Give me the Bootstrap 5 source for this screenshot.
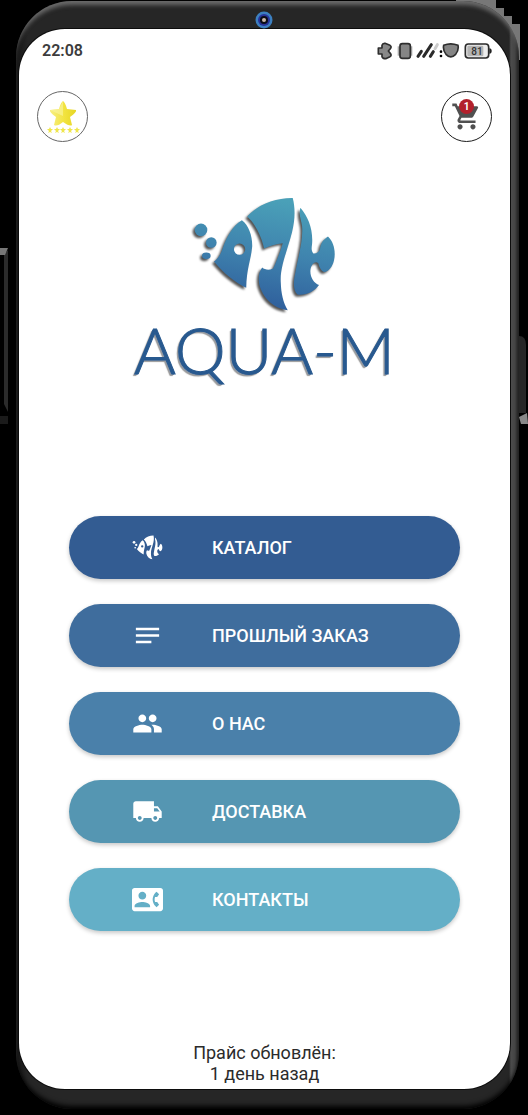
<!DOCTYPE html>
<html lang="ru">
<head>
<meta charset="utf-8">
<meta name="viewport" content="width=device-width, initial-scale=1">
<title>AQUA-M</title>
<link href="https://cdn.jsdelivr.net/npm/bootstrap@5.3.0/dist/css/bootstrap.min.css" rel="stylesheet">
<style>
  body { background: #000; font-family: Roboto, "Liberation Sans", sans-serif; color: #2b2b2b; }
  .device-wrap { min-height: 100vh; padding: 1px 9px 6px 16px; overflow: hidden; }
  .device {
    padding: 28px 9px 20px 3px;
    border-radius: 56px;
    background: linear-gradient(90deg, #161616 0, #262626 12px, #262626 calc(100% - 10px), #4c4c4c calc(100% - 8px), #444 calc(100% - 4px), #1c1c1c 100%);
    box-shadow: inset 0 6px 4px -2px #6a6a6a, inset 0 -5px 5px -2px #000;
  }
  .device-screen { background: #fff; border-radius: 46px; box-shadow: 0 0 0 1px #0c0c0c; }
  .camera { top: 10px; left: 50%; margin-left: -13px; }
  .corner-light { top: 0; right: 8px; }
  .side-key-left { top: 248px; left: 0; }
  .side-key-right { top: 333px; right: 0; }
  .status-row { padding: 12px 16px 0 23px; font-size: 16px; line-height: 20px; font-weight: 600; color: #3c3c3c; }
  .tool-row { padding: 30px 18px 0 18px; }
  .round-btn { width: 51px; height: 51px; padding: 0; border-radius: 50%; background: #fff; border: 1px solid #1c1c1c; }
  .round-btn.thin { border-color: #666; }
  .cart-count { top: 7px; left: 17px; width: 15px; height: 15px; font-size: 10px; line-height: 15px; background: #b3202c; color: #fff; font-weight: 700; border-radius: 50%; }
  .brand { padding-top: 54px; }
  .brand-fish { filter: drop-shadow(-2px 2px 1px #555); }
  .brand-name {
    font: 300 64px/70px Lato, "Open Sans", sans-serif; color: #28598f; -webkit-text-stroke: 1px #28598f;
    text-shadow: -1px 1px 0 #8d97a6, -2px 2px 1px #999; margin: 2px 0 0;
  }
  .menu { padding: 131px 50px 0; gap: 25px; }
  .menu-btn { height: 63px; border: 0; border-radius: 32px; padding: 0 0 0 63px; color: #fff; font-size: 18px; line-height: 24px; font-weight: 500; box-shadow: 0 2px 4px rgba(0,0,0,.22); }
  .menu-btn:hover { color: #fff; filter: brightness(1.08); }
  .menu-icon { width: 80px; }
  .tone-1 { background: #335c92; } .tone-2 { background: #3f6d9d; } .tone-3 { background: #4a80aa; }
  .tone-4 { background: #5596b2; } .tone-5 { background: #64afc7; }
  .price-note { font-size: 18px; line-height: 21px; padding: 40px 0 5px; margin: 0; }
</style>
</head>
<body>
<svg width="0" height="0" class="position-absolute" aria-hidden="true">
  <defs>
    <linearGradient id="sea" gradientUnits="userSpaceOnUse" x1="300" y1="50" x2="250" y2="370">
      <stop offset="0" stop-color="#4aa0b8"/><stop offset=".5" stop-color="#3f83ae"/><stop offset="1" stop-color="#2f5f9c"/>
    </linearGradient>
    <symbol id="fish" viewBox="30 36 440 352">
      <circle cx="59" cy="138" r="19"/><circle cx="90" cy="176" r="16"/><ellipse cx="75" cy="216" rx="13" ry="10"/>
      <path fill-rule="evenodd" d="M182 109C203 124 214 158 213 188C210 225 196 254 195 312C164 298 124 266 98 233C110 226 118 211 124 194C137 157 154 126 182 109ZM175 179A17 17 0 1 0 175 213A17 17 0 1 0 175 179Z"/>
      <path d="M198 98C231 60 286 41 335 42C343 73 342 108 333 144C318 203 296 250 299 296C300 330 306 355 320 380C275 374 243 340 234 301C231 281 233 264 243 251C251 258 264 260 276 254C287 231 297 204 305 178C284 179 265 187 249 194C239 151 220 118 198 98Z"/>
      <path d="M358 71C382 99 397 137 393 182C391 193 391 202 397 209C407 210 414 204 417 196C418 180 426 168 441 158C459 175 465 204 459 230C454 250 443 263 429 265C417 258 414 246 412 238C403 230 390 240 388 260C387 282 399 298 414 304C398 326 371 336 349 332C337 322 336 298 342 271C350 221 367 174 363 126C361 111 352 92 358 71Z"/>
    </symbol>
  </defs>
</svg>

<div class="device-wrap position-relative d-flex flex-column">
  <svg class="corner-light position-absolute" width="64" height="66" aria-hidden="true"><path d="M0 0H40V8H48V16H56V24H64V60H0Z" fill="#777"/></svg>
  <svg class="side-key-left position-absolute" width="9" height="176" aria-hidden="true"><path d="M4 6L8 2V164L4 156Z" fill="#2b2b2b"/><path d="M0 0H8L5 7H0Z" fill="#777"/><path d="M0 168H8V176H0Z" fill="#1b1b1b"/></svg>
  <svg class="side-key-right position-absolute" width="9" height="92" aria-hidden="true"><path d="M0 3Q7 3 7 12V80H0Z" fill="#262626"/><path d="M0 84L8 80L9 91H2Z" fill="#888"/></svg>

  <div class="device position-relative flex-grow-1 d-flex flex-column">
    <svg class="camera position-absolute" width="18" height="18" viewBox="0 0 18 18" aria-hidden="true"><circle cx="9" cy="9" r="8.500" fill="#3c7fc0"/><circle cx="9" cy="9" r="6" fill="#27339a"/><circle cx="9" cy="9" r="4" fill="#0c0c16"/><circle cx="9" cy="9" r="2" fill="#cbb9a8"/></svg>

    <main class="device-screen flex-grow-1 d-flex flex-column">
      <div class="status-row d-flex justify-content-between align-items-center">
        <span>22:08</span>
        <svg width="117" height="18" viewBox="340 126 351 54" role="img" aria-label="Bluetooth, вибрация, сеть, Wi-Fi, батарея 81%">
          <path d="M344 144H355V136Q357 129 364 130L379 136Q385 140 380 146L374 153L380 160Q385 166 379 170L366 176Q357 176 355 170V162H344Z" fill="#888" stroke="#2e2e2e" stroke-width="5" stroke-linejoin="round"/>
          <path d="M402 139H446V167H402Z" fill="#aaa"/><rect x="409" y="131" width="31" height="44" rx="7" fill="#858585" stroke="#2e2e2e" stroke-width="5"/>
          <g stroke="#2a2a2a" stroke-width="9" stroke-linecap="round"><path d="M463 169L473 154M480 169L503 134M500 169L509 155"/><path d="M514 146L521 134" stroke="#ccc"/></g>
          <circle cx="532" cy="155" r="4"/><circle cx="532" cy="168" r="4"/>
          <path d="M540 136Q561 127 583 136Q586 151 576 163Q561 178 547 163Q537 151 540 136Z" fill="#858585" stroke="#2e2e2e" stroke-width="5"/>
          <rect x="605" y="132" width="70" height="42" rx="9" fill="#ededed" stroke="#2a2a2a" stroke-width="5"/><rect x="611" y="137" width="48" height="32" rx="4" fill="#b5b5b5"/><path d="M677 145Q684 145 684 153T677 161Z" fill="#222"/>
          <text x="640" y="164" text-anchor="middle" font-size="30" font-weight="500" fill="#333">81</text>
        </svg>
      </div>

      <div class="tool-row d-flex justify-content-between">
        <button type="button" class="round-btn thin d-flex align-items-center justify-content-center" aria-label="Избранное">
          <svg width="36" height="36" viewBox="0 0 36 36"><defs><linearGradient id="gold"><stop stop-color="#f7ef83"/><stop offset=".55" stop-color="#f2e33f"/><stop offset="1" stop-color="#e6d624"/></linearGradient>
            <path id="tiny" d="M0-3L1-1L3-1L1 1L2 3L0 2L-2 3L-1 1L-3-1L-1-1Z"/></defs>
            <path d="M18 2Q20 3 22 10L31 11Q32 13 25 18L27 26Q25 28 18 23Q12 28 9 26L11 18Q4 13 5 11L14 10Q16 3 18 2Z" fill="url(#gold)"/>
            <path d="M18 2V17L5 11L14 10Z" fill="#faf5a4" opacity=".6"/>
            <g fill="#efe64c"><use href="#tiny" x="5" y="31"/><use href="#tiny" x="12" y="31"/><use href="#tiny" x="18" y="31"/><use href="#tiny" x="25" y="31"/><use href="#tiny" x="32" y="31"/></g></svg>
        </button>
        <button type="button" class="round-btn position-relative d-flex align-items-center justify-content-center" aria-label="Корзина, 1 товар">
          <svg width="31" height="31" viewBox="0 0 24 24" fill="#505050"><path d="M7 18c-1.100 0-1.990.9-1.990 2S5.900 22 7 22s2-.9 2-2-.9-2-2-2zM1 2v2h2l3.600 7.590-1.350 2.450c-.16.280-.25.610-.25.960 0 1.100.9 2 2 2h12v-2H7.420c-.14 0-.25-.11-.25-.25l.03-.12.900-1.630h7.450c.75 0 1.410-.41 1.750-1.030l3.580-6.490A1 1 0 0 0 20.010 4H5.210l-.94-2H1zm16 16c-1.100 0-1.990.9-1.990 2s.89 2 1.990 2 2-.9 2-2-.9-2-2-2z"/></svg>
          <span class="cart-count position-absolute text-center">1</span>
        </button>
      </div>

      <div class="brand d-flex flex-column align-items-center text-center">
        <svg class="brand-fish" width="147" height="117" fill="url(#sea)" aria-hidden="true"><use href="#fish"/></svg>
        <h1 class="brand-name">AQUA-M</h1>
      </div>

      <nav class="menu d-flex flex-column" aria-label="Меню">
        <button type="button" class="menu-btn tone-1 d-flex align-items-center"><span class="menu-icon d-flex"><svg width="31" height="25" fill="#fff"><use href="#fish"/></svg></span>КАТАЛОГ</button>
        <button type="button" class="menu-btn tone-2 d-flex align-items-center"><span class="menu-icon d-flex"><svg width="31" height="31" viewBox="0 0 24 24" fill="#fff"><path d="M3 18h12v-2H3v2zM3 6v2h18V6H3zm0 7h18v-2H3v2z"/></svg></span>ПРОШЛЫЙ ЗАКАЗ</button>
        <button type="button" class="menu-btn tone-3 d-flex align-items-center"><span class="menu-icon d-flex"><svg width="31" height="31" viewBox="0 0 24 24" fill="#fff"><path d="M16 11c1.660 0 2.990-1.340 2.990-3S17.660 5 16 5s-3 1.340-3 3 1.340 3 3 3zm-8 0c1.660 0 2.990-1.340 2.990-3S9.660 5 8 5 5 6.340 5 8s1.340 3 3 3zm0 2c-2.330 0-7 1.170-7 3.500V19h14v-2.500C15 14.170 10.330 13 8 13zm8 0c-.29 0-.62.020-.97.050 1.160.84 1.970 1.970 1.970 3.450V19h6v-2.500c0-2.330-4.670-3.500-7-3.500z"/></svg></span>О НАС</button>
        <button type="button" class="menu-btn tone-4 d-flex align-items-center"><span class="menu-icon d-flex"><svg width="31" height="31" viewBox="0 0 24 24" fill="#fff"><path d="M20 8h-3V4H3c-1.100 0-2 .9-2 2v11h2c0 1.660 1.340 3 3 3s3-1.340 3-3h6c0 1.660 1.340 3 3 3s3-1.340 3-3h2v-5l-3-4zM6 18.500c-.83 0-1.500-.67-1.500-1.500s.67-1.500 1.500-1.500 1.500.67 1.500 1.500-.67 1.500-1.500 1.500zm13.500-9l1.960 2.500H17V9.500h2.500zm-1.500 9c-.83 0-1.500-.67-1.500-1.500s.67-1.500 1.500-1.500 1.500.67 1.500 1.500-.67 1.500-1.500 1.500z"/></svg></span>ДОСТАВКА</button>
        <button type="button" class="menu-btn tone-5 d-flex align-items-center"><span class="menu-icon d-flex"><svg width="31" height="31" viewBox="0 0 24 24" fill="#fff"><path d="M22 3H2C.9 3 0 3.900 0 5v14c0 1.100.9 2 2 2h20c1.100 0 1.990-.9 1.990-2L24 5c0-1.100-.9-2-2-2zM8 6c1.660 0 3 1.340 3 3s-1.340 3-3 3-3-1.340-3-3 1.340-3 3-3zm6 12H2v-1c0-2 4-3.100 6-3.100s6 1.100 6 3.100v1zm3.850-4h1.640L21 16l-1.990 1.990c-1.310-.98-2.280-2.380-2.730-3.990-.18-.64-.28-1.310-.28-2s.1-1.360.28-2c.45-1.620 1.420-3.010 2.730-3.990L21 8l-1.510 2h-1.640c-.22.630-.35 1.300-.35 2s.13 1.370.35 2z"/></svg></span>КОНТАКТЫ</button>
      </nav>

      <p class="price-note text-center mt-auto">Прайс обновлён:<br>1 день назад</p>
    </main>
  </div>
</div>
<script src="https://cdn.jsdelivr.net/npm/bootstrap@5.3.0/dist/js/bootstrap.bundle.min.js"></script>
</body>
</html>
